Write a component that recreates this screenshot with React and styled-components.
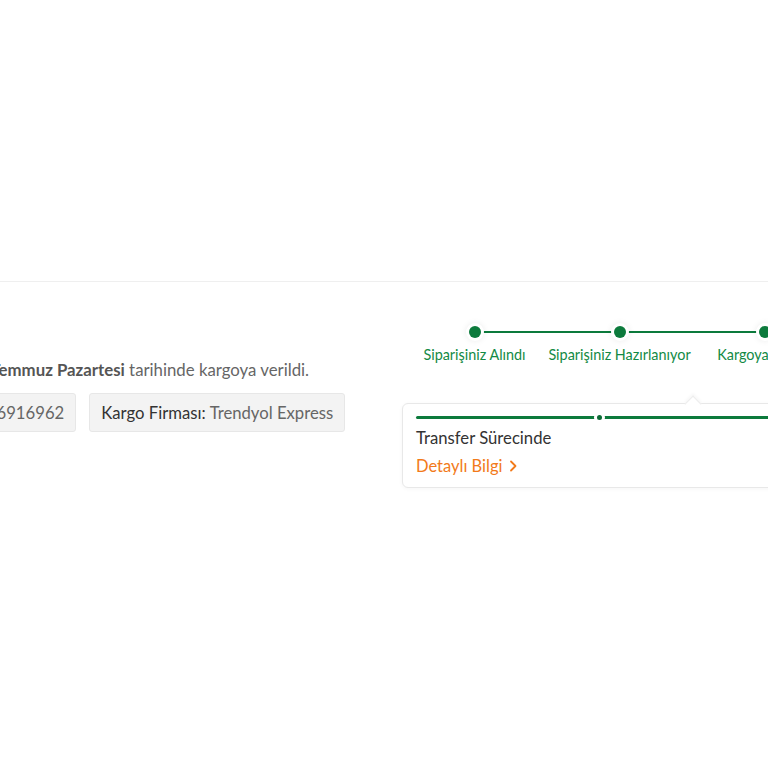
import styled, { createGlobalStyle } from "styled-components";

const GlobalStyle = createGlobalStyle`
  html, body {
    margin: 0;
    padding: 0;
    background: #fff;
    overflow: hidden;
  }
  body {
    font-family: "Lato", "Open Sans", sans-serif;
  }
`;

const Page = styled.div`
  width: 768px;
  height: 768px;
  overflow: hidden;
  padding-top: 281px;
  box-sizing: border-box;
`;

const Section = styled.section`
  border-top: 1px solid #efefef;
  display: flex;
  margin-left: -117px;
  width: 1400px;
`;

const Info = styled.div`
  width: 519px;
  padding-top: 77px;
  display: flex;
  flex-direction: column;
  gap: 13px;
`;

const Shipped = styled.p`
  margin: 0;
  padding-left: 7px;
  font-size: 16.8px;
  line-height: 21px;
  color: #666;
  white-space: nowrap;

  & b {
    color: #555;
    font-weight: 700;
  }
`;

const Chips = styled.div`
  display: flex;
  gap: 13px;
`;

const Chip = styled.div`
  height: 39px;
  box-sizing: border-box;
  padding: 0 11px;
  display: flex;
  align-items: center;
  gap: 4px;
  background: #f3f3f3;
  border: 1px solid #e7e7e7;
  border-radius: 3px;
  font-size: 16.7px;
  color: #666;
  white-space: nowrap;

  & span {
    color: #333;
  }
`;

const Tracking = styled.div`
  padding-top: 37px;
  display: flex;
  flex-direction: column;
`;

const Steps = styled.ol`
  list-style: none;
  margin: 0;
  padding: 0;
  display: flex;
`;

const Step = styled.li`
  position: relative;
  width: 145px;
  display: flex;
  flex-direction: column;
  align-items: center;
  gap: 8px;

  &::after {
    content: "";
    display: ${(p) => (p.$last ? "none" : "block")};
    position: absolute;
    left: 72px;
    top: 12px;
    width: 145px;
    height: 2px;
    background: #0c7a3c;
  }
`;

const Dot = styled.span`
  position: relative;
  z-index: 1;
  width: 12px;
  height: 12px;
  margin-top: 7px;
  border-radius: 50%;
  background: #0c7a3c;
  box-shadow: 0 0 0 3px #fff, 0 0 6px 3px rgba(0, 0, 0, 0.08);
`;

const StepLabel = styled.span`
  font-size: 14.4px;
  line-height: 17px;
  color: #138a45;
  white-space: nowrap;
`;

const Card = styled.div`
  position: relative;
  margin-top: 40px;
  width: 700px;
  box-sizing: border-box;
  padding: 12px 13px 11px;
  border: 1px solid #e8e8e8;
  border-radius: 6px;
  background: #fff;
  box-shadow: 0 1px 4px rgba(0, 0, 0, 0.04);

  &::before {
    content: "";
    position: absolute;
    left: 284px;
    top: -6px;
    width: 11px;
    height: 11px;
    background: #fff;
    border-top: 1px solid #ececec;
    border-left: 1px solid #ececec;
    transform: rotate(45deg);
    box-shadow: -2px -2px 3px rgba(0, 0, 0, 0.03);
  }
`;

const Progress = styled.div`
  position: relative;
  height: 3px;
  background: #0c7a3c;
  border-radius: 2px;
  margin-bottom: 9px;
`;

const ProgressDot = styled.span`
  position: absolute;
  left: 181px;
  top: -1px;
  width: 5px;
  height: 5px;
  border-radius: 50%;
  background: #0c6a35;
  box-shadow: 0 0 0 3px #fff;
`;

const Status = styled.div`
  font-size: 16.7px;
  line-height: 21px;
  color: #333;
`;

const DetailLink = styled.a`
  margin-top: 7px;
  display: inline-flex;
  align-items: center;
  gap: 6px;
  font-size: 16.5px;
  line-height: 20px;
  color: #f27a1a;
  text-decoration: none;
`;

const steps = [
  "Siparişiniz Alındı",
  "Siparişiniz Hazırlanıyor",
  "Kargoya Verildi",
  "Teslim Edildi",
];

export default function App() {
  return (
    <>
      <GlobalStyle />
      <Page>
        <Section>
          <Info>
            <Shipped>
              Siparişiniz <b>15 Temmuz Pazartesi</b> tarihinde kargoya verildi.
            </Shipped>
            <Chips>
              <Chip>
                <span>Takip No:</span> 7256916962
              </Chip>
              <Chip>
                <span>Kargo Firması:</span> Trendyol Express
              </Chip>
            </Chips>
          </Info>
          <Tracking>
            <Steps>
              {steps.map((s, i) => (
                <Step key={s} $last={i === steps.length - 1}>
                  <Dot />
                  <StepLabel>{s}</StepLabel>
                </Step>
              ))}
            </Steps>
            <Card>
              <Progress>
                <ProgressDot />
              </Progress>
              <Status>Transfer Sürecinde</Status>
              <DetailLink href="#">
                Detaylı Bilgi
                <svg width="8" height="12" viewBox="0 0 8 12" fill="none">
                  <path
                    d="M2 1.5L6.5 6 2 10.5"
                    stroke="#f27a1a"
                    strokeWidth="1.8"
                    strokeLinecap="round"
                    strokeLinejoin="round"
                  />
                </svg>
              </DetailLink>
            </Card>
          </Tracking>
        </Section>
      </Page>
    </>
  );
}
